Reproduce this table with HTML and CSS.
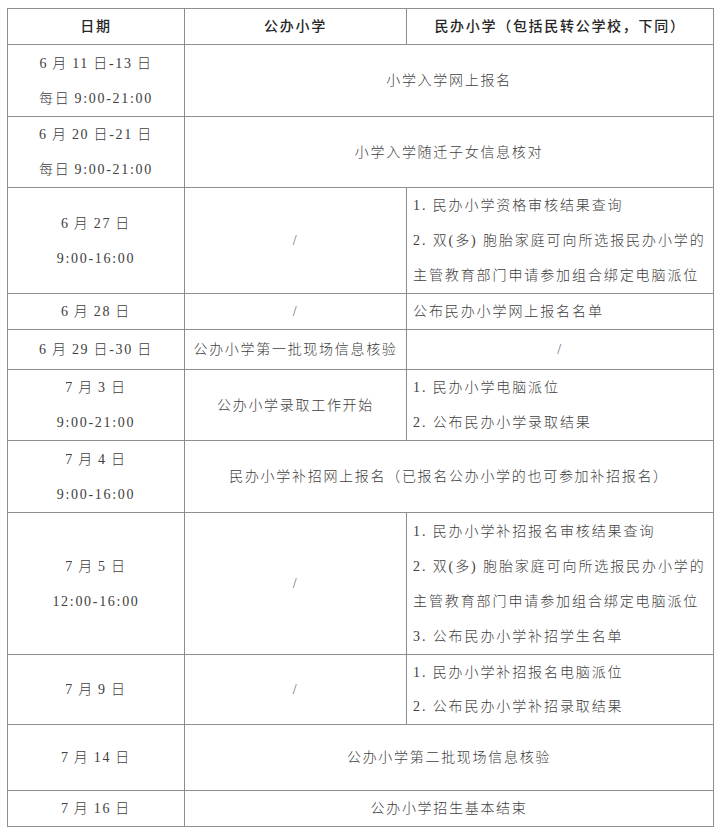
FILE: index.html
```html
<!DOCTYPE html>
<html lang="zh-CN">
<head>
<meta charset="utf-8">
<title>小学招生日程</title>
<link rel="stylesheet" href="styles.css">
</head>
<body>
<table class="sched">
  <colgroup>
    <col class="c-date">
    <col class="c-pub">
    <col class="c-pri">
  </colgroup>
  <thead>
    <tr class="h36">
      <th>日期</th>
      <th>公办小学</th>
      <th>民办小学（包括民转公学校，下同）</th>
    </tr>
  </thead>
  <tbody>
    <tr class="h72">
      <td class="date">6 月 11 日-13 日<br>每日 9:00-21:00</td>
      <td class="mid" colspan="2">小学入学网上报名</td>
    </tr>
    <tr class="h71">
      <td class="date">6 月 20 日-21 日<br>每日 9:00-21:00</td>
      <td class="mid" colspan="2">小学入学随迁子女信息核对</td>
    </tr>
    <tr class="h106">
      <td class="date">6 月 27 日<br>9:00-16:00</td>
      <td class="mid slash">/</td>
      <td class="list">1. 民办小学资格审核结果查询<br>2. 双(多) 胞胎家庭可向所选报民办小学的<br>主管教育部门申请参加组合绑定电脑派位</td>
    </tr>
    <tr class="h36">
      <td class="date">6 月 28 日</td>
      <td class="mid slash">/</td>
      <td class="list">公布民办小学网上报名名单</td>
    </tr>
    <tr class="h40">
      <td class="date">6 月 29 日-30 日</td>
      <td class="mid">公办小学第一批现场信息核验</td>
      <td class="mid slash">/</td>
    </tr>
    <tr class="h71">
      <td class="date">7 月 3 日<br>9:00-21:00</td>
      <td class="mid">公办小学录取工作开始</td>
      <td class="list">1. 民办小学电脑派位<br>2. 公布民办小学录取结果</td>
    </tr>
    <tr class="h72">
      <td class="date">7 月 4 日<br>9:00-16:00</td>
      <td class="mid" colspan="2">民办小学补招网上报名（已报名公办小学的也可参加补招报名）</td>
    </tr>
    <tr class="h142">
      <td class="date">7 月 5 日<br>12:00-16:00</td>
      <td class="mid slash">/</td>
      <td class="list">1. 民办小学补招报名审核结果查询<br>2. 双(多) 胞胎家庭可向所选报民办小学的<br>主管教育部门申请参加组合绑定电脑派位<br>3. 公布民办小学补招学生名单</td>
    </tr>
    <tr class="h70">
      <td class="date">7 月 9 日</td>
      <td class="mid slash">/</td>
      <td class="list tight">1. 民办小学补招报名电脑派位<br>2. 公布民办小学补招录取结果</td>
    </tr>
    <tr class="h66">
      <td class="date">7 月 14 日</td>
      <td class="mid" colspan="2">公办小学第二批现场信息核验</td>
    </tr>
    <tr class="h36">
      <td class="date">7 月 16 日</td>
      <td class="mid" colspan="2">公办小学招生基本结束</td>
    </tr>
  </tbody>
</table>
</body>
</html>
```
FILE: styles.css
```css
html, body {
  margin: 0;
  padding: 0;
  background: #ffffff;
}

.sched {
  margin: 8px 0 0 7px;
  width: 706px;
  border-collapse: collapse;
  table-layout: fixed;
  font-family: "Liberation Serif", "Noto Sans CJK SC", serif;
  font-size: 14px;
  font-weight: 300;
  line-height: 35px;
  letter-spacing: 1.7px;
  color: #404040;
}

.c-date { width: 177px; }
.c-pub { width: 222px; }
.c-pri { width: 307px; }

.sched th,
.sched td {
  border: 1px solid #8e8e8e;
  padding: 0 6px;
  vertical-align: middle;
  white-space: nowrap;
}

.sched th {
  font-weight: 500;
  line-height: 34px;
  color: #262626;
  text-align: center;
}

.date {
  text-align: center;
  word-spacing: -1px;
}

.mid {
  text-align: center;
}

.list {
  text-align: left;
  letter-spacing: 1.9px;
}

.tight {
  line-height: 34px;
}

.slash {
  color: #6a6a6a;
}

.h36 { height: 36px; }
.h40 { height: 40px; }
.h66 { height: 66px; }
.h70 { height: 70px; }
.h71 { height: 71px; }
.h72 { height: 72px; }
.h106 { height: 106px; }
.h142 { height: 142px; }
```
